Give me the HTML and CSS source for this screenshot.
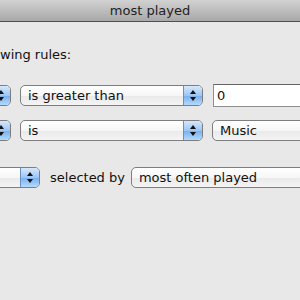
FILE: index.html
```html
<!DOCTYPE html>
<html lang="en">
  <head>
    <meta charset="UTF-8" />
    <title>most played</title>
    <link rel="stylesheet" href="styles.css">
  </head>
  <body>
    <header class="titlebar">most played</header>

    <main class="sheet">
      <p class="caption">wing rules:</p>

      <div class="row row-one">
        <div class="popup popup-cut">
          <span class="label"></span>
          <span class="stepper"><i class="up"></i><i class="down"></i></span>
        </div>
        <div class="popup popup-op">
          <span class="label">is greater than</span>
          <span class="stepper"><i class="up"></i><i class="down"></i></span>
        </div>
        <div class="field">0</div>
      </div>

      <div class="row row-two">
        <div class="popup popup-cut">
          <span class="label"></span>
          <span class="stepper"><i class="up"></i><i class="down"></i></span>
        </div>
        <div class="popup popup-op">
          <span class="label">is</span>
          <span class="stepper"><i class="up"></i><i class="down"></i></span>
        </div>
        <div class="popup popup-value">
          <span class="label">Music</span>
        </div>
      </div>

      <div class="row row-three">
        <div class="popup popup-unit">
          <span class="label"></span>
          <span class="stepper"><i class="up"></i><i class="down"></i></span>
        </div>
        <span class="text">selected by</span>
        <div class="popup popup-order">
          <span class="label">most often played</span>
        </div>
      </div>
    </main>
  </body>
</html>
```

FILE: styles.css
```css
body {
  margin: 0;
  padding: 0;
  background: #e8e8e8;
  color: #111;
  font-family: "DejaVu Sans", sans-serif;
  font-size: 13px;
  overflow: hidden;
  width: 300px;
  height: 300px;
}

.titlebar {
  height: 21px;
  line-height: 21px;
  text-align: center;
  color: #222;
  background: linear-gradient(#d2d2d2, #a8a8a8);
  border-bottom: 1px solid #505050;
}

.sheet {
  padding: 0;
}

.caption {
  margin: 25px 0 0 0;
  line-height: 16px;
  height: 16px;
}

.row {
  display: flex;
  align-items: center;
}

.row-one {
  margin-top: 21px;
  height: 23px;
}

.row-two {
  margin-top: 13px;
  height: 21px;
}

.row-three {
  margin-top: 26px;
  height: 21px;
}

.popup {
  display: flex;
  flex-shrink: 0;
  box-sizing: border-box;
  height: 21px;
  border: 1px solid #7e7e7e;
  border-radius: 5px;
  overflow: hidden;
  background: linear-gradient(#ffffff, #f6f6f6 50%, #e9e9e9 51%, #f4f4f4);
}

.popup .label {
  flex: 1;
  padding-left: 7px;
  line-height: 19px;
  white-space: nowrap;
  overflow: hidden;
}

.stepper {
  width: 18px;
  flex-shrink: 0;
  display: flex;
  flex-direction: column;
  align-items: center;
  justify-content: center;
  gap: 3px;
  border-left: 1px solid #6b8fc0;
  background: linear-gradient(#d6e8fc, #9cc6f4 50%, #76aeee 51%, #b3dafd);
}

.stepper i {
  width: 0;
  height: 0;
  border-left: 3px solid transparent;
  border-right: 3px solid transparent;
}

.stepper .up {
  border-bottom: 4px solid #111;
}

.stepper .down {
  border-top: 4px solid #111;
}

.popup-cut {
  width: 100px;
  margin-left: -89px;
}

.popup-op {
  width: 183px;
  margin-left: 9px;
}

.field {
  flex-shrink: 0;
  box-sizing: border-box;
  width: 120px;
  height: 23px;
  margin-left: 10px;
  padding-left: 3px;
  line-height: 21px;
  background: #fff;
  border: 1px solid #8e8e8e;
  border-top-color: #666;
}

.popup-value {
  width: 120px;
  margin-left: 9px;
}

.popup-unit {
  width: 100px;
  margin-left: -60px;
}

.text {
  margin-left: 10px;
  white-space: nowrap;
}

.popup-order {
  width: 200px;
  margin-left: 6px;
}
```
